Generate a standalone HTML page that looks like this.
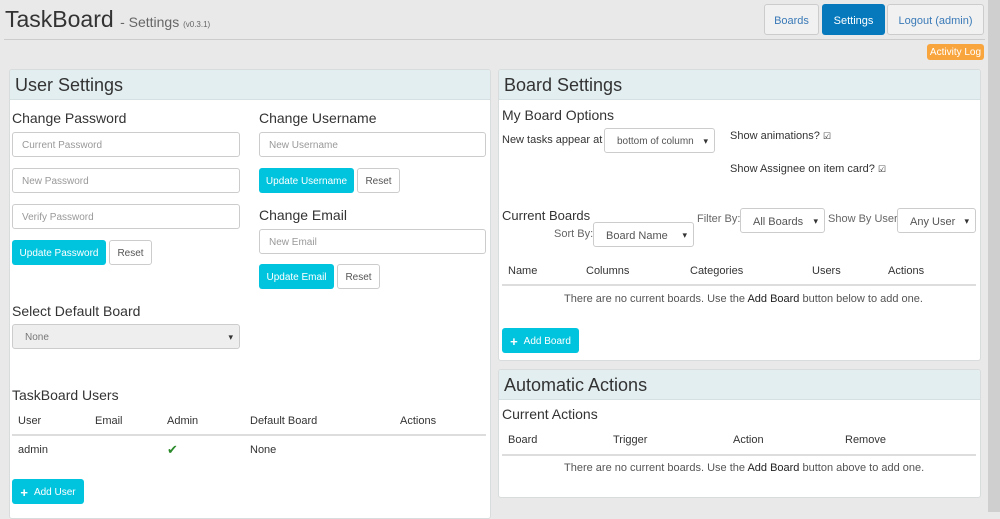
<!DOCTYPE html><html><head><style>
*{box-sizing:border-box;margin:0;padding:0}
body{width:1000px;height:512px;overflow:hidden;background:#e9e9e9;font-family:"Liberation Sans",sans-serif;color:#333;position:relative;font-size:12px}
.a{position:absolute;white-space:nowrap}
.panel{position:absolute;background:#fff;border:1px solid #d8dcdc;border-radius:3px;overflow:hidden}
.ph{height:30px;background:#e3eef0;border-bottom:1px solid #d5e0e2;font-size:18px;padding:5px 5px;color:#333}
.in{position:absolute;border:1px solid #ccc;border-radius:3px;background:#fff;color:#999;font-size:10px;padding-left:9px;padding-top:2px;display:flex;align-items:center}
.btn{position:absolute;border-radius:3px;background:#00c4de;color:#fff;font-size:10px;display:flex;align-items:center;justify-content:center;padding-top:2px}
.rb{position:absolute;border:1px solid #ccc;border-radius:3px;background:#fff;color:#555;font-size:10px;display:flex;align-items:center;justify-content:center;padding-top:2px}
.h{position:absolute;font-size:14px;color:#333;white-space:nowrap}
.sel{position:absolute;border:1px solid #ccc;border-radius:3px;background:#fff;color:#555;font-size:11px;display:flex;align-items:center;padding-left:12px;padding-top:2px}
.sel:after{content:"▾";position:absolute;right:6px;font-size:9px;color:#333}
.t{position:absolute;font-size:11px;color:#333;white-space:nowrap}
.line{position:absolute;height:2px;background:#ddd}
</style></head><body>
<div class="a" style="left:5px;top:6px;font-size:23px;color:#333">TaskBoard <span style="font-size:14px;color:#666">- Settings <span style="font-size:8px">(v0.3.1)</span></span></div>
<div class="a" style="left:4px;top:39px;width:981px;height:1px;background:#ccc"></div>
<div class="rb" style="left:764px;top:4px;width:55px;height:31px;background:#f1f1f1;color:#3a7ab8;font-size:11px">Boards</div>
<div class="btn" style="left:822px;top:4px;width:63px;height:31px;background:#0679bd;font-size:11px">Settings</div>
<div class="rb" style="left:887px;top:4px;width:97px;height:31px;background:#f1f1f1;color:#3a7ab8;font-size:11px">Logout (admin)</div>
<div class="btn" style="left:927px;top:44px;width:57px;height:16px;background:#f9a53e;font-size:10px;padding-top:0">Activity Log</div>
<div class="a" style="left:988px;top:0;width:12px;height:512px;background:#cfcfcf"></div>

<div class="panel" style="left:9px;top:69px;width:482px;height:450px"><div class="ph">User Settings</div></div>
<div class="h" style="left:12px;top:110px">Change Password</div>
<div class="in" style="left:12px;top:132px;width:228px;height:25px">Current Password</div>
<div class="in" style="left:12px;top:168px;width:228px;height:25px">New Password</div>
<div class="in" style="left:12px;top:204px;width:228px;height:25px">Verify Password</div>
<div class="btn" style="left:12px;top:240px;width:94px;height:25px">Update Password</div>
<div class="rb" style="left:109px;top:240px;width:43px;height:25px">Reset</div>
<div class="h" style="left:259px;top:110px">Change Username</div>
<div class="in" style="left:259px;top:132px;width:227px;height:25px">New Username</div>
<div class="btn" style="left:259px;top:168px;width:95px;height:25px">Update Username</div>
<div class="rb" style="left:357px;top:168px;width:43px;height:25px">Reset</div>
<div class="h" style="left:259px;top:207px">Change Email</div>
<div class="in" style="left:259px;top:229px;width:227px;height:25px">New Email</div>
<div class="btn" style="left:259px;top:264px;width:75px;height:25px">Update Email</div>
<div class="rb" style="left:337px;top:264px;width:43px;height:25px">Reset</div>
<div class="h" style="left:12px;top:303px">Select Default Board</div>
<div class="sel" style="left:12px;top:324px;width:228px;height:25px;background:#eee;color:#777;font-size:10px">None</div>
<div class="h" style="left:12px;top:387px">TaskBoard Users</div>
<div class="t" style="left:18px;top:415px">User</div><div class="t" style="left:95px;top:415px">Email</div><div class="t" style="left:167px;top:415px">Admin</div><div class="t" style="left:250px;top:415px">Default Board</div><div class="t" style="left:400px;top:415px">Actions</div>
<div class="line" style="left:12px;top:434px;width:474px"></div>
<div class="t" style="left:18px;top:444px">admin</div><div class="t" style="left:167px;top:442px;color:#2a8a2a;font-size:13px">✔</div><div class="t" style="left:250px;top:444px">None</div>
<div class="btn" style="left:12px;top:479px;width:72px;height:25px"><b style="font-size:13px;margin-right:6px">+</b>Add User</div>

<div class="panel" style="left:498px;top:69px;width:483px;height:292px"><div class="ph">Board Settings</div></div>
<div class="h" style="left:502px;top:107px">My Board Options</div>
<div class="t" style="left:502px;top:134px">New tasks appear at</div>
<div class="sel" style="left:604px;top:128px;width:111px;height:25px;font-size:10px">bottom of column</div>
<div class="t" style="left:730px;top:130px">Show animations? <span style="font-size:9px">☑</span></div>
<div class="t" style="left:730px;top:163px">Show Assignee on item card? <span style="font-size:9px">☑</span></div>
<div class="h" style="left:502px;top:208px;font-size:13px">Current Boards</div>
<div class="t" style="left:697px;top:213px;color:#666">Filter By:</div>
<div class="sel" style="left:740px;top:208px;width:85px;height:25px">All Boards</div>
<div class="t" style="left:828px;top:213px;color:#666">Show By User:</div>
<div class="sel" style="left:897px;top:208px;width:79px;height:25px">Any User</div>
<div class="t" style="left:554px;top:228px;color:#666">Sort By:</div>
<div class="sel" style="left:593px;top:222px;width:101px;height:25px">Board Name</div>
<div class="t" style="left:508px;top:265px">Name</div><div class="t" style="left:586px;top:265px">Columns</div><div class="t" style="left:690px;top:265px">Categories</div><div class="t" style="left:812px;top:265px">Users</div><div class="t" style="left:888px;top:265px">Actions</div>
<div class="line" style="left:502px;top:284px;width:474px"></div>
<div class="t" style="left:564px;top:293px;color:#555">There are no current boards. Use the <span style="color:#222">Add Board</span> button below to add one.</div>
<div class="btn" style="left:502px;top:328px;width:77px;height:25px"><b style="font-size:13px;margin-right:6px">+</b>Add Board</div>

<div class="panel" style="left:498px;top:369px;width:483px;height:129px"><div class="ph">Automatic Actions</div></div>
<div class="h" style="left:502px;top:406px">Current Actions</div>
<div class="t" style="left:508px;top:434px">Board</div><div class="t" style="left:613px;top:434px">Trigger</div><div class="t" style="left:733px;top:434px">Action</div><div class="t" style="left:845px;top:434px">Remove</div>
<div class="line" style="left:502px;top:454px;width:474px"></div>
<div class="t" style="left:564px;top:462px;color:#555">There are no current boards. Use the <span style="color:#222">Add Board</span> button above to add one.</div>
</body></html>
